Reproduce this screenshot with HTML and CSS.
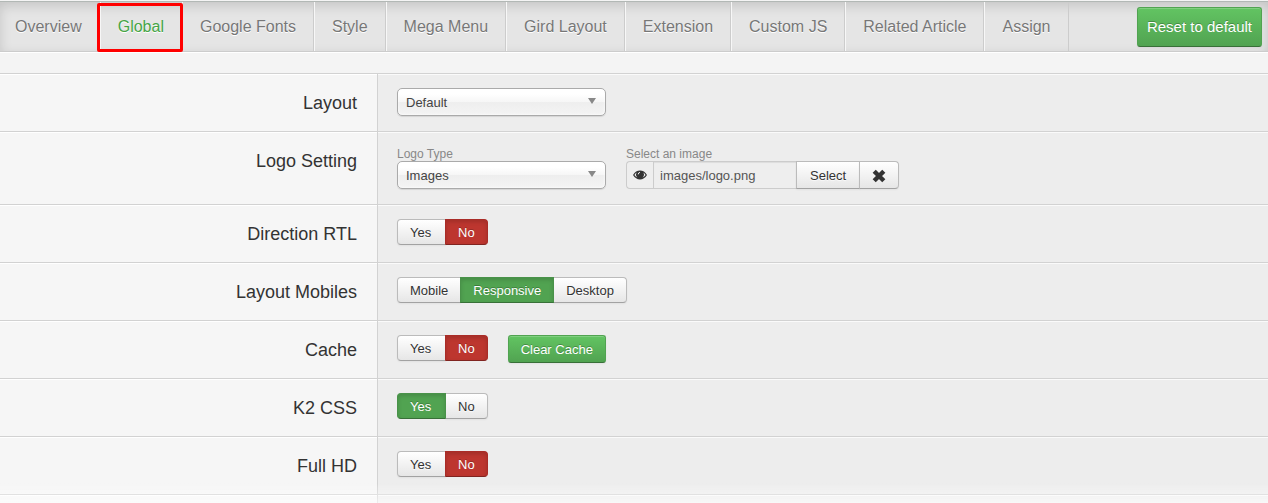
FILE: index.html
```html
<!DOCTYPE html>
<html lang="en">
<head>
  <meta charset="UTF-8" />
  <meta name="viewport" content="width=device-width, initial-scale=1.0" />
  <title>Template Settings</title>
  <link rel="stylesheet" href="styles.css">
</head>
<body>

  <!-- Tabs -->
  <header class="toolbar">
    <nav class="tabs">
      <a href="#overview" class="tab">Overview</a>
      <a href="#global" class="tab active">Global</a>
      <a href="#fonts" class="tab">Google Fonts</a>
      <a href="#style" class="tab">Style</a>
      <a href="#megamenu" class="tab">Mega Menu</a>
      <a href="#layout" class="tab">Gird Layout</a>
      <a href="#extension" class="tab">Extension</a>
      <a href="#customjs" class="tab">Custom JS</a>
      <a href="#related" class="tab">Related Article</a>
      <a href="#assign" class="tab">Assign</a>
    </nav>
    <button type="button" class="btn btn-success btn-reset">Reset to default</button>
  </header>

  <!-- Global settings -->
  <form class="settings">
    <div class="row">
      <label class="row-label" for="layout-select">Layout</label>
      <div class="row-field">
        <div class="select-wrap">
          <select id="layout-select" class="select">
            <option>Default</option>
          </select>
        </div>
      </div>
    </div>

    <div class="row">
      <div class="row-label">Logo Setting</div>
      <div class="row-field">
        <div class="field">
          <label class="hint" for="logo-type">Logo Type</label>
          <div class="select-wrap">
            <select id="logo-type" class="select">
              <option>Images</option>
              <option>Text</option>
            </select>
          </div>
        </div>
        <div class="field">
          <label class="hint" for="logo-image">Select an image</label>
          <div class="media">
            <span class="media-preview">
              <svg width="14" height="10" viewBox="0 0 14 10">
                <path d="M0 5C1.8 2 4.2.6 7 .6S12.2 2 14 5C12.2 8 9.8 9.4 7 9.4S1.8 8 0 5Z" fill="#333" />
                <path d="M1.4 5C2 4 2.800 3.200 3.800 2.600A3.700 3.700 0 0 0 4.400 7.500C3.200 7 2.200 6.200 1.400 5ZM12.600 5C12 4 11.200 3.200 10.200 2.600A3.700 3.700 0 0 1 9.600 7.500C10.800 7 11.800 6.200 12.600 5Z" fill="#eee" />
                <path d="M5.200 4.400A2 2 0 0 1 7 2.400" fill="none" stroke="#eee" stroke-width="1" />
              </svg>
            </span>
            <input type="text" id="logo-image" class="media-input" value="images/logo.png" readonly />
            <button type="button" class="btn media-select">Select</button>
            <button type="button" class="btn media-clear" aria-label="Clear">
              <svg width="14" height="14" viewBox="0 0 14 14">
                <path d="M2.200 2.200L11.800 11.800M11.800 2.200L2.200 11.800" stroke="#333" stroke-width="4.400" stroke-linejoin="round" />
              </svg>
            </button>
          </div>
        </div>
      </div>
    </div>

    <div class="row">
      <div class="row-label" id="rtl-label">Direction RTL</div>
      <div class="row-field">
        <div class="btn-group" role="radiogroup" aria-labelledby="rtl-label">
          <input type="radio" name="rtl" id="rtl-yes" />
          <label class="btn btn-yes" for="rtl-yes">Yes</label>
          <input type="radio" name="rtl" id="rtl-no" class="off" checked />
          <label class="btn" for="rtl-no">No</label>
        </div>
      </div>
    </div>

    <div class="row">
      <div class="row-label" id="mobile-label">Layout Mobiles</div>
      <div class="row-field">
        <div class="btn-group" role="radiogroup" aria-labelledby="mobile-label">
          <input type="radio" name="mobile" id="mobile-mobile" />
          <label class="btn" for="mobile-mobile">Mobile</label>
          <input type="radio" name="mobile" id="mobile-responsive" checked />
          <label class="btn" for="mobile-responsive">Responsive</label>
          <input type="radio" name="mobile" id="mobile-desktop" />
          <label class="btn" for="mobile-desktop">Desktop</label>
        </div>
      </div>
    </div>

    <div class="row">
      <div class="row-label" id="cache-label">Cache</div>
      <div class="row-field">
        <div class="btn-group" role="radiogroup" aria-labelledby="cache-label">
          <input type="radio" name="cache" id="cache-yes" />
          <label class="btn btn-yes" for="cache-yes">Yes</label>
          <input type="radio" name="cache" id="cache-no" class="off" checked />
          <label class="btn" for="cache-no">No</label>
        </div>
        <button type="button" class="btn btn-success">Clear Cache</button>
      </div>
    </div>

    <div class="row">
      <div class="row-label" id="k2-label">K2 CSS</div>
      <div class="row-field">
        <div class="btn-group" role="radiogroup" aria-labelledby="k2-label">
          <input type="radio" name="k2" id="k2-yes" checked />
          <label class="btn btn-yes" for="k2-yes">Yes</label>
          <input type="radio" name="k2" id="k2-no" class="off" />
          <label class="btn" for="k2-no">No</label>
        </div>
      </div>
    </div>

    <div class="row">
      <div class="row-label" id="hd-label">Full HD</div>
      <div class="row-field">
        <div class="btn-group" role="radiogroup" aria-labelledby="hd-label">
          <input type="radio" name="hd" id="hd-yes" />
          <label class="btn btn-yes" for="hd-yes">Yes</label>
          <input type="radio" name="hd" id="hd-no" class="off" checked />
          <label class="btn" for="hd-no">No</label>
        </div>
      </div>
    </div>

    <div class="row">
      <div class="row-label"></div>
      <div class="row-field"></div>
    </div>
  </form>

</body>
</html>
```
FILE: styles.css
```css
* { margin: 0; padding: 0; box-sizing: border-box; }
html, body {
  height: 100%;
  overflow: hidden;
}

body {
  padding-top: 1px;
  background: #f4f4f4;
  color: #333;
  font-family: "Liberation Sans", Arial, sans-serif;
  font-size: 13px;
  line-height: 18px;
}

/* fade at the end of the visible list */
body::after {
  content: "";
  position: fixed;
  left: 0;
  right: 0;
  bottom: 0;
  height: 20px;
  background: linear-gradient(rgba(255,255,255,0), rgba(255,255,255,0.6));
  pointer-events: none;
}

button, input, select { font: inherit; color: inherit; }

/* Toolbar */
.toolbar {
  display: flex;
  justify-content: space-between;
  border-top: 1px solid #b2b8b5;
  border-bottom: 1px solid #ccc;
  background: #e5e5e5;
  box-shadow: inset 0 4px 12px rgba(0,0,0,0.14), 0 1px 0 #fff;
}

.tabs { display: flex; }

.tab {
  position: relative;
  padding: 1px 17px 0;
  border-left: 1px solid #f7f7f7;
  border-right: 1px solid #ccc;
  color: #777;
  font-size: 16px;
  line-height: 48px;
  text-decoration: none;
  text-shadow: 0 1px 0 #fff;
  white-space: nowrap;
}

.tab:first-child {
  padding-left: 15px;
  border-left: 0;
}

.tab.active {
  color: #46a546;
}

.tab.active::after {
  content: "";
  position: absolute;
  inset: 1px -2px -1px -4px;
  border: 3px solid #f00;
  border-radius: 2px;
  z-index: 1;
}

/* Buttons */
.btn {
  height: 26px;
  padding: 1px 12px 0;
  border: 1px solid #bbb;
  border-bottom-color: #a2a2a2;
  border-radius: 4px;
  background: linear-gradient(#fff, #e6e6e6);
  box-shadow: inset 0 1px 0 rgba(255,255,255,0.2), 0 1px 2px rgba(0,0,0,0.05);
  line-height: 24px;
  text-shadow: 0 1px 1px rgba(255,255,255,0.75);
  cursor: pointer;
}

.btn-success {
  height: 28px;
  border-color: #51a351 #51a351 #387038;
  border-radius: 3px;
  background: linear-gradient(#62c462, #51a351);
  box-shadow: inset 0 1px 0 rgba(255,255,255,0.2), 0 1px 2px rgba(0,0,0,0.05);
  color: #fff;
  text-shadow: 0 -1px 0 rgba(0,0,0,0.25);
}

.btn-reset {
  height: 40px;
  margin: 5px 6px 0 0;
  padding: 0 9px;
  font-size: 15px;
}

.btn-group { display: flex; }

.btn-group input {
  position: absolute;
  opacity: 0;
}

.btn-group .btn { border-radius: 0; }
.btn-group .btn + input + .btn { margin-left: -1px; }
.btn-group .btn:nth-child(2) { border-radius: 4px 0 0 4px; }
.btn-group .btn:last-child { border-radius: 0 4px 4px 0; }
.btn-yes { min-width: 49px; }

.btn-group input:checked + .btn {
  z-index: 1;
  border-color: #499249 #499249 #387038;
  background: #51a351;
  box-shadow: inset 0 2px 4px rgba(0,0,0,0.15);
  color: #fff;
  text-shadow: 0 -1px 0 rgba(0,0,0,0.25);
}

.btn-group input.off:checked + .btn {
  border-color: #a92c27 #a92c27 #802420;
  background: #bd362f;
}

/* Settings rows */
.settings { margin-top: 21px; }

.row {
  display: flex;
  border-top: 1px solid #d2d2d2;
}

.row-label {
  width: 378px;
  flex-shrink: 0;
  padding: 17px 20px 15px 0;
  border-right: 1px solid #d2d2d2;
  background: #f6f6f6;
  box-shadow: inset 0 1px 0 #fff;
  font-size: 18px;
  line-height: 24px;
  text-align: right;
}

.row-field {
  display: flex;
  flex: 1;
  align-items: flex-start;
  gap: 20px;
  min-height: 57px;
  padding: 14px 19px;
  background: #ededed;
  box-shadow: inset 0 1px 0 #fafafa;
}

.field { padding-bottom: 1px; }

.hint {
  display: block;
  height: 15px;
  color: #888;
  font-size: 12px;
  line-height: 16px;
}

.select-wrap {
  position: relative;
  width: 209px;
}

.select-wrap::after {
  content: "";
  position: absolute;
  top: 10px;
  right: 10px;
  border: 4px solid transparent;
  border-top: 6px solid #888;
  border-bottom: 0;
  pointer-events: none;
}

.select {
  display: block;
  width: 100%;
  height: 28px;
  padding: 1px 8px 0;
  appearance: none;
  border: 1px solid #aaa;
  border-radius: 5px;
  background: linear-gradient(#fff 20%, #f6f6f6 50%, #eee 52%, #f4f4f4 100%);
  box-shadow: inset 0 0 3px #fff, 0 1px 1px rgba(0,0,0,0.1);
  color: #444;
}

/* Image picker */
.media { display: flex; }

.media-preview {
  display: flex;
  align-items: center;
  justify-content: center;
  width: 27px;
  height: 28px;
  border: 1px solid #ccc;
  border-right: 0;
  border-radius: 4px 0 0 4px;
  background: #eee;
}

.media-input {
  width: 144px;
  height: 28px;
  padding: 0 6px;
  border: 1px solid #ccc;
  background: #eee;
  box-shadow: inset 0 1px 1px rgba(0,0,0,0.075);
  color: #555;
}

.media .btn {
  height: 28px;
  margin-left: -1px;
}

.media-select { border-radius: 0; }
.media .media-select { padding: 1px 13px 0; }

.media-clear {
  display: flex;
  align-items: center;
  border-radius: 0 4px 4px 0;
}
```
